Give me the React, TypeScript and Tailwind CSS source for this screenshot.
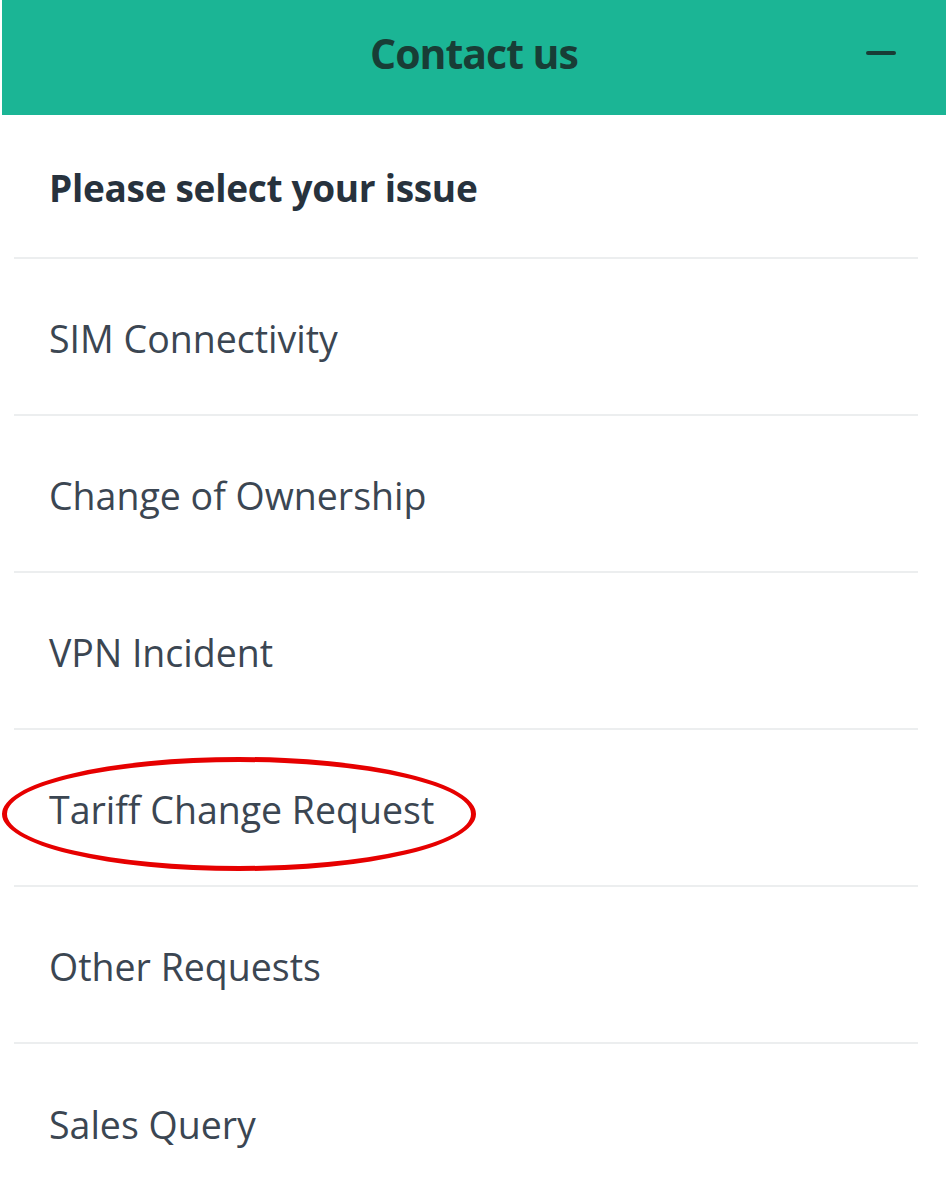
import React from "react";

const items = [
  "SIM Connectivity",
  "Change of Ownership",
  "VPN Incident",
  "Tariff Change Request",
  "Other Requests",
  "Sales Query",
];

export default function App() {
  return (
    <div
      className="relative w-[946px] h-[1185px] bg-white overflow-hidden"
      style={{ fontFamily: '"Open Sans", "Noto Sans", sans-serif' }}
    >
      <div className="ml-[2px] h-[115px] bg-[#1bb595] flex items-center justify-center relative">
        <h1 className="text-[41px] font-bold text-[#183d36] tracking-[-1px] mb-[8px]">Contact us</h1>
        <div className="absolute right-[50px] top-[51px] w-[30px] h-[4px] rounded-full bg-[#183d36]" />
      </div>
      <div className="pl-[14px] pr-[28px]">
        <div className="h-[144px] flex items-center pl-[35px] pt-[4px] border-b-2 border-[#eceeef]">
          <span className="text-[37px] font-bold text-[#27323d] tracking-[-0.3px]">Please select your issue</span>
        </div>
        {items.map((t, i) => (
          <div
            key={t}
            className={
              "h-[157px] flex items-center pl-[35px] pt-[5px] " +
              (i < items.length - 1 ? "border-b-2 border-[#eceeef]" : "")
            }
          >
            <span className="text-[37.5px] text-[#3b4652]">{t}</span>
          </div>
        ))}
      </div>
      <div className="absolute left-[2px] top-[757px] w-[474px] h-[114px] rounded-[50%] border-[5px] border-[#e60000]" />
    </div>
  );
}
